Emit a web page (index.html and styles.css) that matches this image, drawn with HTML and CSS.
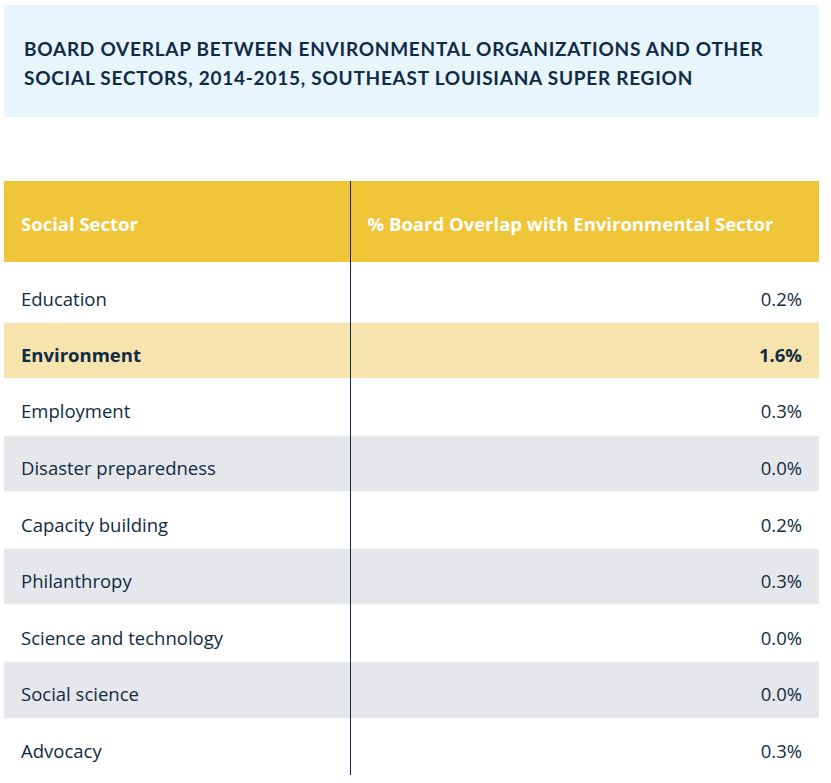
FILE: index.html
```html
<!DOCTYPE html>
<html lang="en">
<head>
<meta charset="utf-8">
<title>Board Overlap</title>
<link rel="stylesheet" href="styles.css">
</head>
<body>
<div class="page">
  <div class="title-box">
    <h1 class="title">BOARD OVERLAP BETWEEN ENVIRONMENTAL ORGANIZATIONS AND OTHER SOCIAL SECTORS, 2014-2015, SOUTHEAST LOUISIANA SUPER REGION</h1>
  </div>
  <table class="data">
    <thead>
      <tr>
        <th class="col-sector">Social Sector</th>
        <th class="col-value">% Board Overlap with Environmental Sector</th>
      </tr>
    </thead>
    <tbody>
      <tr class="first"><td class="col-sector">Education</td><td class="col-value num">0.2%</td></tr>
      <tr class="hl"><td class="col-sector">Environment</td><td class="col-value num">1.6%</td></tr>
      <tr><td class="col-sector">Employment</td><td class="col-value num">0.3%</td></tr>
      <tr class="alt"><td class="col-sector">Disaster preparedness</td><td class="col-value num">0.0%</td></tr>
      <tr><td class="col-sector">Capacity building</td><td class="col-value num">0.2%</td></tr>
      <tr class="alt"><td class="col-sector">Philanthropy</td><td class="col-value num">0.3%</td></tr>
      <tr><td class="col-sector">Science and technology</td><td class="col-value num">0.0%</td></tr>
      <tr class="alt"><td class="col-sector">Social science</td><td class="col-value num">0.0%</td></tr>
      <tr><td class="col-sector">Advocacy</td><td class="col-value num">0.3%</td></tr>
    </tbody>
  </table>
</div>
</body>
</html>
```

FILE: styles.css
```css
html, body {
  margin: 0;
  padding: 0;
  background: #ffffff;
}

body {
  font-family: "Open Sans", "Lato", sans-serif;
  color: #0f2b45;
}

.page {
  padding: 5px 12px 0 4px;
}

.title-box {
  background: #e8f5fd;
  height: 112px;
  box-sizing: border-box;
  padding: 29px 40px 0 20px;
}

.title {
  margin: 0;
  font-family: "Lato", "Open Sans", sans-serif;
  font-size: 19px;
  font-weight: 700;
  line-height: 29px;
  letter-spacing: 0.75px;
  color: #0f2b45;
}

.data {
  margin-top: 64px;
  width: 815px;
  border-collapse: collapse;
  table-layout: fixed;
}

.data th,
.data td {
  padding: 0 17px;
  text-align: left;
}

.data th {
  background: #efc638;
  color: #ffffff;
  font-size: 18.5px;
  font-weight: 700;
  height: 81px;
  padding-top: 3px;
  box-sizing: border-box;
}

.data td {
  font-size: 18.5px;
  height: 56.6px;
  box-sizing: border-box;
  padding-top: 8px;
  border-top: 1px solid #fafafa;
}

.data .col-sector {
  width: 346px;
  border-right: 1px solid #0f2b45;
}

.data .num {
  text-align: right;
}

.data tr.first td {
  height: 60px;
  padding-top: 14px;
  border-top: none;
}

.data tr.hl td {
  background: #f7e3ad;
  font-weight: 700;
}

.data tr.alt td {
  background: #e6e7ea;
}
```
